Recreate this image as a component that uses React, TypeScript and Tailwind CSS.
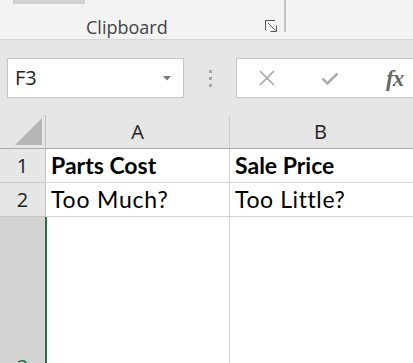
import React from "react";

const uiFont = { fontFamily: '"Open Sans", "Noto Sans", sans-serif' };
const cellFont = { fontFamily: 'Lato, "Liberation Sans", sans-serif' };

function LauncherIcon() {
  return (
    <svg width="14" height="14" viewBox="0 0 14 14" fill="none" stroke="#555" strokeWidth="1">
      <path d="M1.5 11V1.5H11" />
      <path d="M4 4l7.5 7.5" />
      <path d="M6.5 12.5h6v-6" />
    </svg>
  );
}

function CancelIcon() {
  return (
    <svg width="18" height="16" viewBox="0 0 18 16" fill="none" stroke="#a6a6a6" strokeWidth="1.6">
      <path d="M2 1l14 14M16 1L2 15" />
    </svg>
  );
}

function CheckIcon() {
  return (
    <svg width="18" height="14" viewBox="0 0 18 14" fill="none" stroke="#acacac" strokeWidth="2.6">
      <path d="M1.5 6.5l5 5L16.5 1.5" />
    </svg>
  );
}

export default function App() {
  return (
    <div className="w-[413px] h-[363px] overflow-hidden bg-[#e6e6e6] flex flex-col" style={uiFont}>
      {/* ribbon fragment */}
      <div className="h-[40px] shrink-0 bg-[#f3f3f3] border-b border-[#d6d6d6] flex">
        <div className="w-[284px] flex flex-col">
          <div className="ml-[13px] w-[72px] h-[4px] bg-[#d2d2d2]" />
          <div className="flex items-start h-[35px] pt-[14px]">
            <span className="ml-[86px] text-[18px] leading-none text-[#444]">Clipboard</span>
            <span className="ml-auto mr-[6px] mt-[1px]">
              <LauncherIcon />
            </span>
          </div>
        </div>
        <div className="w-[2px] h-[32px] bg-[#c6c6c6]" />
      </div>

      {/* formula bar */}
      <div className="h-[75px] shrink-0 flex items-start pt-[18px]">
        <div className="ml-[7px] w-[177px] h-[40px] bg-white border border-[#c6c6c6] flex items-center">
          <span className="ml-[7px] text-[20px] text-[#222] leading-none">F3</span>
          <svg className="ml-auto mr-[12px]" width="8" height="5" viewBox="0 0 8 5">
            <path d="M0 0h8L4 4.5z" fill="#777" />
          </svg>
        </div>
        <div className="w-[52px] h-[40px] flex flex-col items-center justify-center gap-[4px]">
          <div className="w-[3px] h-[3px] bg-[#a8a8a8]" />
          <div className="w-[3px] h-[3px] bg-[#a8a8a8]" />
          <div className="w-[3px] h-[3px] bg-[#a8a8a8]" />
        </div>
        <div className="flex-1 h-[40px] bg-white border border-[#c6c6c6] border-r-0 flex items-center">
          <span className="ml-[21px]">
            <CancelIcon />
          </span>
          <span className="ml-[45px] mt-[2px]">
            <CheckIcon />
          </span>
          <span
            className="ml-[47px] text-[23px] italic font-semibold text-[#666] leading-none tracking-[-1px]"
            style={{ fontFamily: '"Liberation Serif", "DejaVu Serif", serif' }}
          >
            fx
          </span>
        </div>
      </div>

      {/* column headers */}
      <div className="h-[34px] shrink-0 flex border-b border-[#ababab]">
        <div className="w-[46px] border-r border-[#bcbcbc] flex items-end justify-end pr-[3px] pb-[3px]">
          <svg width="27" height="27" viewBox="0 0 27 27">
            <path d="M27 0V27H0z" fill="#b5b5b5" />
          </svg>
        </div>
        <div className="w-[184px] border-r border-[#d0d0d0] flex items-center justify-center text-[20px] text-[#222]">A</div>
        <div className="flex-1 flex items-center justify-center text-[20px] text-[#222] pr-[2px]">B</div>
      </div>

      {/* row 1 */}
      <div className="h-[34px] shrink-0 flex">
        <div className="w-[46px] border-r border-b border-[#c8c8c8] flex items-center justify-center text-[20px] text-[#222]">1</div>
        <div className="w-[184px] bg-white border-r border-b border-[#d4d4d4] flex items-center pl-[5px] text-[23px] font-bold text-black" style={cellFont}>
          Parts Cost
        </div>
        <div className="flex-1 bg-white border-b border-[#d4d4d4] flex items-center pl-[5px] text-[23px] font-bold text-black" style={cellFont}>
          Sale Price
        </div>
      </div>

      {/* row 2 */}
      <div className="h-[34px] shrink-0 flex">
        <div className="w-[46px] border-r border-b border-[#c8c8c8] flex items-center justify-center text-[20px] text-[#222]">2</div>
        <div className="w-[184px] bg-white border-r border-b border-[#d4d4d4] flex items-center pl-[5px] text-[23px] tracking-[0.8px] text-black" style={cellFont}>
          Too Much?
        </div>
        <div className="flex-1 bg-white border-b border-[#d4d4d4] flex items-center pl-[5px] text-[23px] tracking-[0.6px] text-black" style={cellFont}>
          Too Little?
        </div>
      </div>

      {/* row 3 (selected, tall) */}
      <div className="h-[166px] shrink-0 flex">
        <div className="w-[47px] bg-[#d2d2d2] border-r-2 border-[#217346] flex items-end justify-center pb-[4px]">
          <span className="text-[20px] leading-[24px] text-[#217346]">3</span>
        </div>
        <div className="w-[183px] bg-white border-r border-[#d4d4d4]" />
        <div className="flex-1 bg-white" />
      </div>
    </div>
  );
}
